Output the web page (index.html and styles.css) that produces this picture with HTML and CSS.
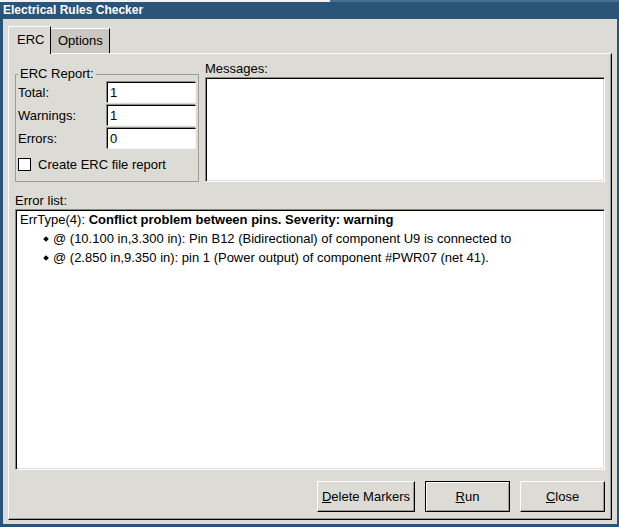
FILE: index.html
```html
<!DOCTYPE html>
<html>
<head>
<meta charset="utf-8">
<title>Electrical Rules Checker</title>
<link rel="stylesheet" href="styles.css">
</head>
<body>
<div class="screen">
  <div class="topstrip"><div class="strip-white"></div></div>
  <div class="titlebar">Electrical Rules Checker</div>
  <div class="client">
    <div class="tabs">
      <div class="tab active">ERC</div>
      <div class="tab tab-options">Options</div>
    </div>
    <div class="panel">
      <div class="top">
        <fieldset class="group">
          <legend>ERC Report:</legend>
          <div class="field"><span class="name">Total:</span><div class="entry">1</div></div>
          <div class="field"><span class="name">Warnings:</span><div class="entry">1</div></div>
          <div class="field"><span class="name">Errors:</span><div class="entry">0</div></div>
          <div class="check"><span class="box"></span><span>Create ERC file report</span></div>
        </fieldset>
        <div class="messages">
          <div class="lbl">Messages:</div>
          <div class="sunken msgbox"></div>
        </div>
      </div>
      <div class="lbl errlbl">Error list:</div>
      <div class="sunken errbox">
        <div class="row">ErrType(4): <b>Conflict problem between pins. Severity: warning</b></div>
        <div class="row item"><span class="bullet"></span>@ (10.100 in,3.300 in): Pin B12 (Bidirectional) of component U9 is connected to</div>
        <div class="row item"><span class="bullet"></span>@ (2.850 in,9.350 in): pin 1 (Power output) of component #PWR07 (net 41).</div>
      </div>
      <div class="buttons">
        <button class="btn wide"><span><u>D</u>elete Markers</span></button>
        <button class="btn default"><span><u>R</u>un</span></button>
        <button class="btn"><span><u>C</u>lose</span></button>
      </div>
    </div>
  </div>
</div>
</body>
</html>
```
FILE: styles.css
```css
html, body {
  margin: 0;
  padding: 0;
}
body {
  width: 619px;
  height: 527px;
  overflow: hidden;
  background: #2a5478;
  font-family: "Liberation Sans", Arial, sans-serif;
  font-size: 13px;
  color: #000;
}
.screen {
  display: flex;
  flex-direction: column;
  height: 527px;
}
.topstrip {
  height: 2px;
  display: flex;
  background: #46708f;
}
.strip-white {
  width: 330px;
  background: #f2f2f2;
}
.titlebar {
  height: 17px;
  line-height: 17px;
  padding-left: 3px;
  color: #fff;
  font-size: 12px;
  font-weight: bold;
  background: #2a5478;
}
.client {
  flex: 1;
  margin: 0 2px 3px 3px;
  background: #dcdbd5;
  padding: 7px 5px 4px 5px;
  display: flex;
  flex-direction: column;
}
.tabs {
  display: flex;
  align-items: flex-end;
  height: 27px;
  flex: none;
}
.tab {
  box-sizing: border-box;
  height: 25px;
  width: 59px;
  padding: 4px 0 0 7px;
  line-height: 15px;
  border-top: 1px solid #fff;
  border-right: 1px solid #000;
  background: #cac8c2;
  white-space: nowrap;
}
.tab.active {
  position: relative;
  z-index: 1;
  width: 43px;
  height: 28px;
  margin-bottom: -1px;
  padding: 5px 0 0 8px;
  border-left: 1px solid #fff;
  background: #dcdbd5;
}
.panel {
  flex: 1;
  display: flex;
  flex-direction: column;
  border-top: 1px solid #fff;
  border-left: 1px solid #fff;
  border-right: 1px solid #000;
  border-bottom: 1px solid #000;
  box-shadow: inset -1px -1px 0 #9d9c97;
  padding: 6px 6px 7px 6px;
}
.top {
  display: flex;
  gap: 6px;
  height: 122px;
  flex: none;
}
.group {
  margin: 6px 0 0 0;
  width: 184px;
  min-width: 0;
  box-sizing: border-box;
  border: 1px solid #9e9d98;
  padding: 0 2px;
}
.group legend {
  padding: 0 2px;
  line-height: 16px;
}
.field {
  display: flex;
  align-items: center;
  height: 21px;
}
.field + .field {
  margin-top: 2px;
}
.name {
  width: 89px;
  flex: none;
}
.entry {
  flex: 1;
  box-sizing: border-box;
  height: 21px;
  line-height: 19px;
  padding-left: 2px;
  background: #fff;
  border: 1px solid;
  border-color: #000 #f4f4f2 #f4f4f2 #000;
  box-shadow: -1px -1px 0 #8d8c87;
}
.check {
  display: flex;
  align-items: center;
  height: 19px;
  margin-top: 6px;
}
.box {
  box-sizing: border-box;
  width: 13px;
  height: 13px;
  margin-right: 7px;
  background: #fff;
  border: 1px solid #000;
}
.messages {
  flex: 1;
  display: flex;
  flex-direction: column;
}
.lbl {
  height: 17px;
  line-height: 17px;
  flex: none;
}
.sunken {
  background: #fff;
  border: 1px solid;
  border-color: #8a8984 #fff #fff #8a8984;
  box-shadow: inset 1px 1px 0 #000, inset -1px -1px 0 #dcdbd5;
}
.msgbox {
  flex: 1;
}
.errlbl {
  margin-top: 11px;
  height: 16px;
  line-height: 16px;
}
.errbox {
  flex: 1;
  padding: 0 0 0 4px;
}
.row {
  line-height: 19px;
  white-space: nowrap;
}
.item {
  padding-left: 23px;
}
.bullet {
  display: inline-block;
  width: 4px;
  height: 4px;
  margin: 0 5px 0 1px;
  background: #000;
  transform: rotate(45deg);
  vertical-align: 2px;
}
.buttons {
  display: flex;
  justify-content: flex-end;
  gap: 10px;
  height: 31px;
  margin-top: 11px;
  flex: none;
}
.btn {
  box-sizing: border-box;
  width: 85px;
  height: 31px;
  padding: 0;
  font: inherit;
  color: #000;
  background: #dcdbd5;
  border: 1px solid;
  border-color: #fff #000 #000 #fff;
  box-shadow: inset -1px -1px 0 #9d9c97;
  display: flex;
  align-items: center;
  justify-content: center;
}
.btn.wide {
  width: 98px;
}
.btn.default {
  border: 1px solid #000;
  box-shadow: inset 1px 1px 0 #fff, inset -1px -1px 0 #9d9c97;
}
```
